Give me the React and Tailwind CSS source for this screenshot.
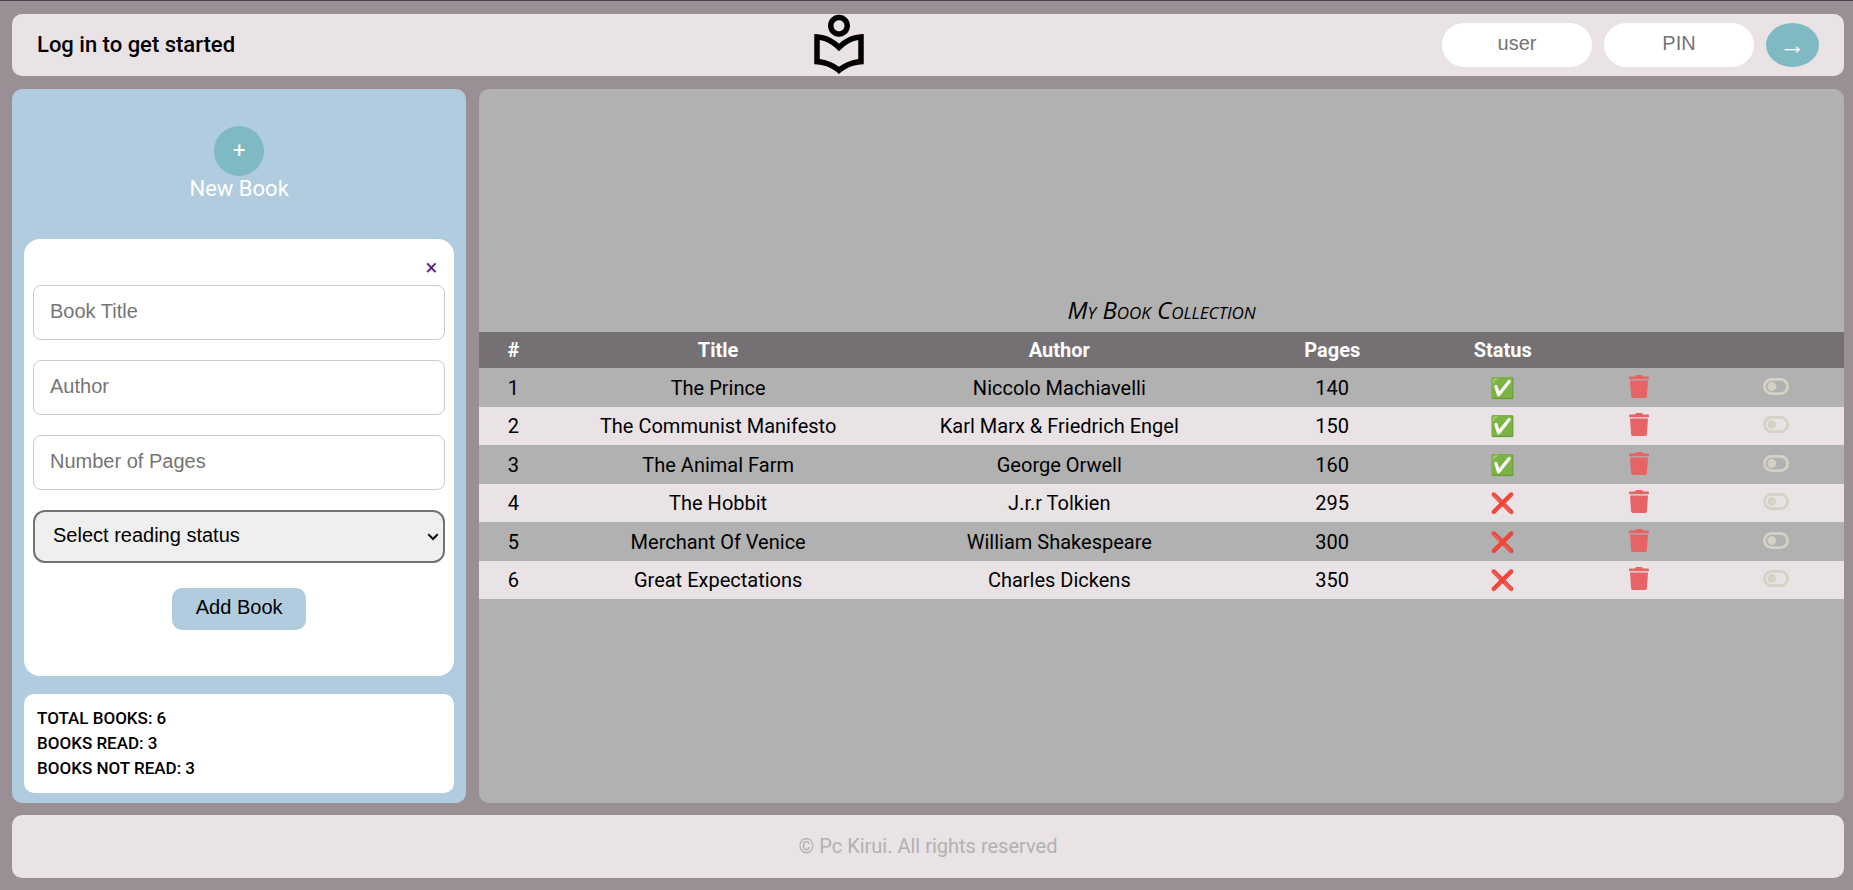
import { MdOutlineLocalLibrary } from "react-icons/md";

const books = [
  ["The Prince", "Niccolo Machiavelli", 140, true],
  ["The Communist Manifesto", "Karl Marx & Friedrich Engel", 150, true],
  ["The Animal Farm", "George Orwell", 160, true],
  ["The Hobbit", "J.r.r Tolkien", 295, false],
  ["Merchant Of Venice", "William Shakespeare", 300, false],
  ["Great Expectations", "Charles Dickens", 350, false],
];

const loginField =
  "h-11 w-[150px] rounded-[22px] bg-white pb-[3px] text-center font-['Liberation_Sans',sans-serif] text-[20px] placeholder:text-[#757575]";
const formField =
  "mb-5 h-[55px] w-full rounded-lg border border-[#cccccc] bg-white px-4 pb-[3px] font-['Liberation_Sans',sans-serif] text-[20px] placeholder:text-[#757575]";

function TrashIcon() {
  return (
    <svg viewBox="0 0 20 23" className="h-[23px] w-5" fill="#e66465" aria-hidden="true">
      <path d="M6.500 .600Q6.800 0 7.500 0h5q.700 0 1 .600l.500.900h5q1 0 1 1v1.100q0 .700-.700.700H.700Q0 4.300 0 3.600V2.500q0-1 1-1h5z" />
      <path d="M1 5.500h18L17.900 21.300Q17.700 23 16.100 23H3.900Q2.300 23 2.100 21.300z" />
    </svg>
  );
}

function ToggleIcon() {
  return (
    <svg viewBox="0 0 26 17" className="h-[17px] w-[26px]" aria-hidden="true">
      <rect x="1.400" y="1.400" width="23.200" height="14.200" rx="7.100" fill="none" stroke="#d5d1c4" strokeWidth="2.800" />
      <circle cx="8.800" cy="8.500" r="4.400" fill="#d5d1c4" />
    </svg>
  );
}

function Header() {
  return (
    <header className="flex h-[62px] items-center justify-between rounded-[10px] bg-[#e9e3e5] px-[25px]">
      <h1 className="pb-0.5 text-[22px] font-medium">Log in to get started</h1>
      <MdOutlineLocalLibrary className="size-[66px]" aria-hidden="true" />
      <form className="flex gap-3" onSubmit={(e) => e.preventDefault()}>
        <input type="text" aria-label="user" placeholder="user" className={loginField} />
        <input type="password" aria-label="PIN" placeholder="PIN" className={loginField} />
        <button type="submit" aria-label="Log in" className="h-11 w-[53px] rounded-[50%] bg-[#7fb9c1] text-[26px] leading-8 text-white">
          →
        </button>
      </form>
    </header>
  );
}

function Sidebar() {
  return (
    <aside className="flex flex-col rounded-[10px] bg-[#b1ccde] px-3 pb-[10px]">
      <div className="flex h-[150px] flex-col items-center justify-center text-white">
        <button type="button" aria-label="Add a new book" className="size-[50px] rounded-full bg-[#7fb9c1] pb-0.5 text-[22px]">
          +
        </button>
        <p className="text-[22px] leading-[26px]">New Book</p>
      </div>

      <form className="mb-[18px] flex grow flex-col rounded-2xl bg-white px-[9px] pt-[14px]" onSubmit={(e) => e.preventDefault()}>
        <a href="#close" aria-label="Close" className="mr-2 mb-0.5 self-end text-[22px] leading-[30px] text-[#551a8b]">
          ×
        </a>
        <input type="text" aria-label="Book Title" placeholder="Book Title" className={formField} />
        <input type="text" aria-label="Author" placeholder="Author" className={formField} />
        <input type="text" aria-label="Number of Pages" placeholder="Number of Pages" className={formField} />
        <div className="relative mb-[25px]">
          <select
            aria-label="Reading status"
            className="block h-[53px] w-full appearance-none rounded-xl border-2 border-[#757074] bg-[#efefef] pr-8 pb-[3px] pl-[18px] font-['Liberation_Sans',sans-serif] text-[20px]"
          >
            <option>Select reading status</option>
            <option>Read</option>
            <option>Not read</option>
          </select>
          <svg
            viewBox="0 0 12 8"
            className="pointer-events-none absolute top-[23px] right-[6px] h-2 w-3"
            fill="none"
            stroke="black"
            strokeWidth="2"
            aria-hidden="true"
          >
            <path d="M1.300 1.300 6 6l4.700-4.700" />
          </svg>
        </div>
        <button
          type="submit"
          className="h-[42px] w-[134px] self-center rounded-[10px] bg-[#b1ccde] pb-[5px] font-['Liberation_Sans',sans-serif] text-[20px]"
        >
          Add Book
        </button>
      </form>

      <div className="rounded-[10px] bg-white px-[13px] py-3 text-[17px] leading-[25px] font-medium">
        <p>TOTAL BOOKS: 6</p>
        <p>BOOKS READ: 3</p>
        <p>BOOKS NOT READ: 3</p>
      </div>
    </aside>
  );
}

function Collection() {
  return (
    <section className="flex flex-col justify-center overflow-hidden rounded-[10px] bg-[#b1b1b1]">
      <table className="w-full table-fixed border-collapse text-center text-[20px] leading-6">
        <caption className="h-[38px] font-['Rock_Salt','Open_Sans',cursive] text-[24px] leading-8 italic [font-variant-caps:small-caps]">
          My Book Collection
        </caption>
        <colgroup>
          <col className="w-[5%]" />
          <col className="w-[25%]" />
          <col className="w-[25%]" />
          <col className="w-[15%]" />
          <col className="w-[10%]" />
          <col className="w-[10%]" />
          <col className="w-[10%]" />
        </colgroup>
        <thead>
          <tr className="h-9 bg-[#757074] text-white">
            <th>#</th>
            <th>Title</th>
            <th>Author</th>
            <th>Pages</th>
            <th>Status</th>
            <th></th>
            <th></th>
          </tr>
        </thead>
        <tbody>
          {books.map(([title, author, pages, read], i) => (
            <tr key={title} className="odd:h-[39px] even:h-[38px] even:bg-[#e9e3e5]">
              <td className="pt-px">{i + 1}</td>
              <td className="pt-px">{title}</td>
              <td className="pt-px">{author}</td>
              <td className="pt-px">{pages}</td>
              <td className="pt-px">{read ? "✅" : "❌"}</td>
              <td className="pb-0.5">
                <button type="button" aria-label={`Delete ${title}`} className="mx-auto block">
                  <TrashIcon />
                </button>
              </td>
              <td className="pb-0.5">
                <button type="button" aria-label={`Toggle status of ${title}`} className="mx-auto block">
                  <ToggleIcon />
                </button>
              </td>
            </tr>
          ))}
        </tbody>
      </table>
    </section>
  );
}

export default function App() {
  return (
    <div className="flex min-h-screen flex-col border-t border-[#45424f] bg-[#9b8f96] pt-[13px] pr-[9px] pb-3 pl-3 font-['Roboto',sans-serif] text-black">
      <Header />
      <main className="mt-[13px] mb-3 grid grow grid-cols-[24.8%_1fr] gap-[13px]">
        <Sidebar />
        <Collection />
      </main>
      <footer className="flex h-[63px] items-center justify-center rounded-[10px] bg-[#e9e3e5] pb-0.5 text-[20px] text-[#b1b1b1]">
        © Pc Kirui. All rights reserved
      </footer>
    </div>
  );
}
